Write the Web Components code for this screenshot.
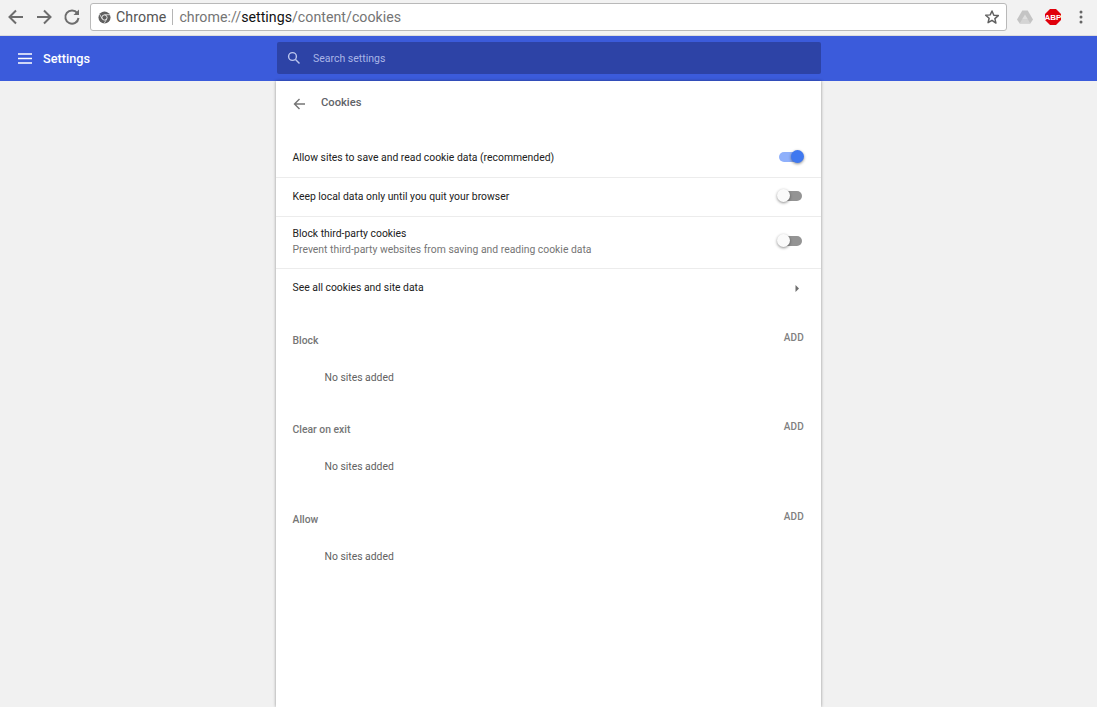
<!DOCTYPE html>
<html>
<head>
<meta charset="utf-8">
<title>Settings - Cookies</title>
<style>
  html, body { margin: 0; height: 100%; }
  body { background: #f1f1f1; font-family: Roboto, "Liberation Sans", sans-serif; overflow: hidden; }
</style>
</head>
<body>
<browser-bar></browser-bar>
<settings-header></settings-header>
<settings-page>
  <page-title>Cookies</page-title>
  <setting-row height="40" first>Allow sites to save and read cookie data (recommended)<toggle-switch slot="end" on raised></toggle-switch></setting-row>
  <setting-row height="39">Keep local data only until you quit your browser<toggle-switch slot="end" raised></toggle-switch></setting-row>
  <setting-row height="52" class="tall">Block third-party cookies<span slot="sub">Prevent third-party websites from saving and reading cookie data</span><toggle-switch slot="end" raised></toggle-switch></setting-row>
  <setting-row height="38">See all cookies and site data<svg slot="end" width="24" height="10" viewBox="0 0 24 10"><path d="M15.500 2l3.500 3.500-3.500 3.500z" fill="#6e6e6e"/></svg></setting-row>
  <site-list name="Block" top="25"></site-list>
  <site-list name="Clear on exit" top="35"></site-list>
  <site-list name="Allow" top="36"></site-list>
</settings-page>

<script>
class BrowserBar extends HTMLElement {
  constructor() {
    super();
    this.attachShadow({ mode: 'open' });
    this.shadowRoot.innerHTML = `
      <style>
        :host { display: flex; align-items: center; height: 36px; box-sizing: border-box; background: #f2f2f2; padding: 0 14px 2px 6px; border-bottom: 1px solid #dcdcdc; }
        .nav { display: flex; gap: 8px; margin-right: 8px; }
        .nav svg { display: block; }
        .omni { flex: 1; height: 28px; box-sizing: border-box; margin-top: 1px; background: #fff; border: 1px solid #b9b9b9; border-radius: 3px; display: flex; align-items: center; padding: 0 6px 0 7px; font: 14.200px Roboto, "Liberation Sans", sans-serif; color: #757575; }
        .chip { color: #555; margin-left: 5px; letter-spacing: .1px; }
        .sep { width: 1px; height: 16px; background: #b5b5b5; margin: 0 6px; }
        .url { flex: 1; white-space: pre; letter-spacing: .02px; }
        .url b { font-weight: 400; color: #111; }
        .tools { display: flex; align-items: center; margin-left: 10px; }
        .abp { margin-left: 12px; }
        .more { margin-left: 18px; }
      </style>
      <div class="nav">
        <svg width="20" height="20" viewBox="0 0 20 20"><path d="M17 10H4M10 3.500L3.500 10l6.500 6.500" fill="none" stroke="#6d6d6d" stroke-width="2"/></svg>
        <svg width="20" height="20" viewBox="0 0 20 20"><path d="M3 10h13M10 3.500l6.500 6.500-6.500 6.500" fill="none" stroke="#6d6d6d" stroke-width="2"/></svg>
        <svg width="20" height="20" viewBox="0 0 20 20"><path d="M15.300 6.200A6.600 6.600 0 1 0 16.500 11" fill="none" stroke="#6d6d6d" stroke-width="2"/><path d="M17 2.500V8h-5.500z" fill="#6d6d6d"/></svg>
      </div>
      <div class="omni">
        <svg width="13" height="13" viewBox="0 0 14 14"><circle cx="7" cy="7" r="6.500" fill="#5f5f5f"/><circle cx="7" cy="7" r="2.800" fill="#5f5f5f" stroke="#f2f2f2" stroke-width="1"/><path d="M7 4h6M4.500 8.500L1.800 3.500M9.500 8.500l-3 5" stroke="#f2f2f2" stroke-width=".8"/></svg>
        <span class="chip">Chrome</span><span class="sep"></span>
        <span class="url">chrome://<b>settings</b>/content/cookies</span>
        <svg width="16" height="16" viewBox="0 0 24 24"><path d="M12 3l2.700 6.300 6.800.6-5.200 4.500 1.600 6.700L12 17l-5.900 3.600 1.600-6.700-5.200-4.500 6.800-.6z" fill="none" stroke="#606060" stroke-width="2.200" stroke-linejoin="round"/></svg>
      </div>
      <div class="tools">
        <svg width="16" height="14" viewBox="0 0 16 14"><path d="M5.300 0.500h5.400L16 9.500l-2.700 4H2.700L0 9.500z" fill="#c4c4c4"/><path d="M8 4.500l3 5H5z" fill="#dedede"/><path d="M5 9.500h6l2.300 4H2.700z" fill="#d4d4d4"/></svg>
        <svg class="abp" width="16" height="16" viewBox="0 0 16 16"><path d="M5 0h6l5 5v6l-5 5H5l-5-5V5z" fill="#e0000b"/><text x="8" y="11" text-anchor="middle" font-family="Liberation Sans" font-weight="700" font-size="8" fill="#fff">ABP</text></svg>
        <svg class="more" width="4" height="14" viewBox="0 0 4 14"><circle cx="2" cy="2" r="1.500" fill="#666"/><circle cx="2" cy="7" r="1.500" fill="#666"/><circle cx="2" cy="12" r="1.500" fill="#666"/></svg>
      </div>`;
  }
}
customElements.define('browser-bar', BrowserBar);

class SettingsHeader extends HTMLElement {
  constructor() {
    super();
    this.attachShadow({ mode: 'open' });
    this.shadowRoot.innerHTML = `
      <style>
        :host { display: grid; grid-template-columns: 277px 544px 1fr; align-items: center; height: 45px; background: #3b5bdb; color: #fff; }
        .left { display: flex; align-items: center; padding-left: 18px; gap: 11px; font-weight: 500; font-size: 12.700px; }
        .search { height: 32px; margin-top: -1px; background: #2d43a6; border-radius: 2px; display: flex; align-items: center; padding-left: 10px; gap: 12px; font-size: 10.500px; color: #a9b5e6; }
      </style>
      <div class="left">
        <svg width="14" height="11" viewBox="0 0 14 11"><path d="M0 1h14M0 5.500h14M0 10h14" stroke="#fff" stroke-width="1.500"/></svg>
        <span>Settings</span>
      </div>
      <div class="search">
        <svg width="14" height="14" viewBox="0 0 14 14"><circle cx="5.500" cy="5.500" r="3.900" fill="none" stroke="#bcc6ee" stroke-width="1.400"/><path d="M8.500 8.500l4 4" stroke="#bcc6ee" stroke-width="1.500"/></svg>
        <span>Search settings</span>
      </div>
      <div></div>`;
  }
}
customElements.define('settings-header', SettingsHeader);

class SettingsPage extends HTMLElement {
  constructor() {
    super();
    this.attachShadow({ mode: 'open' });
    this.shadowRoot.innerHTML = `
      <style>
        :host { display: block; box-sizing: border-box; width: 545px; height: 626px; margin-left: 276px; background: #fff; box-shadow: 0 0 3px rgba(0,0,0,.4); color: #333; }
      </style>
      <slot></slot>`;
  }
}
customElements.define('settings-page', SettingsPage);

class PageTitle extends HTMLElement {
  constructor() {
    super();
    this.attachShadow({ mode: 'open' });
    this.shadowRoot.innerHTML = `
      <style>
        :host { display: flex; align-items: center; height: 56px; padding: 0 0 14px 17px; box-sizing: border-box; font-weight: 500; font-size: 11.200px; color: #5f6368; }
        svg { margin-right: 16px; margin-top: 3px; }
      </style>
      <svg width="12" height="12" viewBox="0 0 12 12"><path d="M12 6H1.500M6.500 1L1.500 6l5 5" fill="none" stroke="#757575" stroke-width="1.400"/></svg>
      <slot></slot>`;
  }
}
customElements.define('page-title', PageTitle);

class SettingRow extends HTMLElement {
  constructor() {
    super();
    this.attachShadow({ mode: 'open' });
    this.shadowRoot.innerHTML = `
      <style>
        :host { display: flex; align-items: center; justify-content: space-between; box-sizing: border-box; padding: 0 17px 0 16.500px; color: #212121; font-size: 10.380px; border-top: 1px solid #ececec; }
        :host([first]) { border-top: 0; padding-top: 2px; }
        :host(.tall) { padding-bottom: 1px; }
        .text { display: flex; flex-direction: column; gap: 2px; line-height: 14px; }
        ::slotted([slot="sub"]) { color: #757575; }
      </style>
      <div class="text"><div><slot></slot></div><slot name="sub"></slot></div>
      <slot name="end"></slot>`;
  }
  connectedCallback() {
    this.style.height = this.getAttribute('height') + 'px';
  }
}
customElements.define('setting-row', SettingRow);

class ToggleSwitch extends HTMLElement {
  constructor() {
    super();
    this.attachShadow({ mode: 'open' });
    this.shadowRoot.innerHTML = `
      <style>
        :host { display: block; position: relative; width: 24px; height: 14px; margin-right: 2px; }
        :host([raised]) { margin-top: -2px; }
        .bar { position: absolute; left: 2px; right: 0; top: 2px; height: 10px; border-radius: 5px; background: #949494; }
        .knob { position: absolute; left: -1px; top: 0; width: 13px; height: 13px; border-radius: 50%; background: #fafafa; box-shadow: 0 1px 3px rgba(0,0,0,.45); }
        :host([on]) { width: 25px; margin-right: 1px; }
        :host([on]) .bar { left: 1px; background: #8fb0fb; }
        :host([on]) .knob { left: auto; right: -1px; background: #3f78f0; }
      </style>
      <div class="bar"></div><div class="knob"></div>`;
  }
}
customElements.define('toggle-switch', ToggleSwitch);

class SiteList extends HTMLElement {
  constructor() {
    super();
    this.attachShadow({ mode: 'open' });
    this.shadowRoot.innerHTML = `
      <style>
        :host { display: block; padding: 0 17px 0 16.500px; font-size: 10.380px; }
        .head { display: flex; justify-content: space-between; align-items: flex-start; height: 14px; }
        .name { font-weight: 500; color: #757575; line-height: 14px; padding-top: 3px; }
        .add { font-weight: 500; color: #808080; font-size: 10px; line-height: 14px; letter-spacing: .2px; }
        .empty { padding: 26px 0 0 32px; line-height: 14px; color: #616161; }
      </style>
      <div class="head"><span class="name"></span><span class="add">ADD</span></div>
      <div class="empty">No sites added</div>`;
  }
  connectedCallback() {
    this.shadowRoot.querySelector('.name').textContent = this.getAttribute('name');
    this.style.marginTop = this.getAttribute('top') + 'px';
  }
}
customElements.define('site-list', SiteList);
</script>
</body>
</html>
